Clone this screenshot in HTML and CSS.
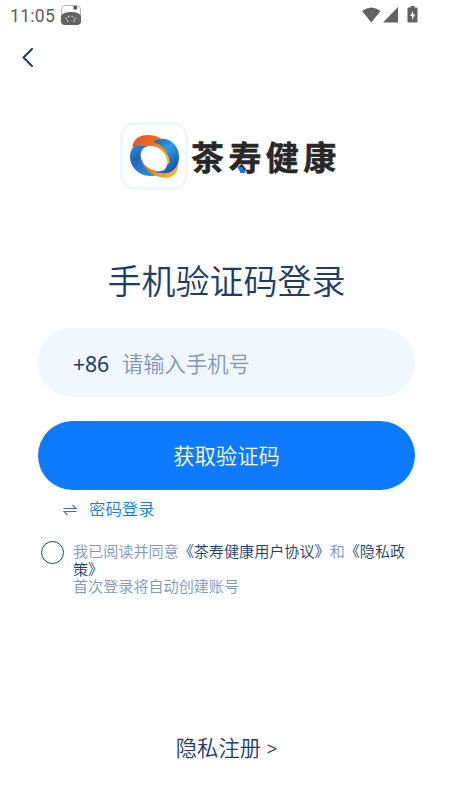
FILE: index.html
```
<!DOCTYPE html>
<html lang="zh-CN">
<head>
<meta charset="utf-8">
<meta name="viewport" content="width=device-width, initial-scale=1">
<title>茶寿健康</title>
<link rel="stylesheet" href="styles.css">
</head>
<body>
<header class="status">
  <span class="time">11:05</span>
  <svg class="app-icon" width="20" height="20" viewBox="0 0 20 20">
    <rect x=".5" y=".5" width="19" height="19" rx="4" fill="#fff" stroke="#b5b5b5"/>
    <path d="M0 11Q2 7 10 7t10 4v5q0 4-4 4H4q-4 0-4-4z" fill="#626262"/>
    <rect x="12.5" y="1" width="3.5" height="3.5" fill="#555"/>
    <path d="M4.500 13.500h1.300M7 11.500h1.300M10.500 11.500h1.300M13.500 13.500h1.300M6 16h1.300M12.500 16h1.300" stroke="#ddd" stroke-width="1.300"/>
  </svg>
  <svg class="signals" width="58" height="20" viewBox="0 0 58 20">
    <path d="M1 6Q10.500-1 19.500 6l-9.200 11.500z" fill="#626262"/>
    <path d="M22 17.500 37 2v15.500z" fill="#626262"/>
    <path d="M47.500 2.500h2V1h4v1.500h2q1 0 1 1v13q0 1-1 1h-8q-1 0-1-1v-13q0-1 1-1z" fill="#626262"/>
    <path d="M52 6 49 11h2v4l3.200-5.500H52z" fill="#fff"/>
  </svg>
</header>
<nav class="nav">
  <svg width="12" height="20" viewBox="0 0 12 20" fill="none" stroke="#1d3c69" stroke-width="2" stroke-linecap="round" stroke-linejoin="round"><path d="M10 1 1.500 9.500l8.500 8.500"/></svg>
</nav>
<main>
  <div class="brand">
    <div class="brand-mark">
      <svg width="54" height="48" viewBox="6 6 162 144">
        <defs>
          <linearGradient id="warm" x1="0" y1="0" x2="1" y2="1"><stop offset="0" stop-color="#e5482a"/><stop offset=".5" stop-color="#f47920"/><stop offset="1" stop-color="#fcc80c"/></linearGradient>
          <linearGradient id="left" x1="0" y1="0" x2=".7" y2="1"><stop offset="0" stop-color="#2f9fe2"/><stop offset=".4" stop-color="#1f66bb"/><stop offset="1" stop-color="#2b94df"/></linearGradient>
          <linearGradient id="right" x1="0" y1="0" x2=".6" y2="1"><stop offset="0" stop-color="#1d5db4"/><stop offset=".45" stop-color="#2b9ce3"/><stop offset="1" stop-color="#1b55ab"/></linearGradient>
        </defs>
        <path fill="url(#left)" d="M15 80C15 55 32 39 58 37L88 40 50 85 105 128C96 135 86 139 74 138C40 136 15 110 15 80z"/>
        <path fill="url(#right)" d="M84 36C91 27 105 24 120 27C145 32 162 53 162 82C162 110 145 130 118 131L98 128 130 90z"/>
        <path fill="url(#warm)" d="M22 52C24 29 42 15 67 15C87 15 101 20 112 29C99 27 89 30 84 37C112 42 132 69 134 97L126 106 70 50C53 46 35 47 22 52z"/>
        <path fill="url(#warm)" d="M46 76L54 72 92 127C103 132 119 132 134 128C148 122 156 112 158 99C163 124 146 143 123 143C82 143 52 119 46 76z"/>
        <path fill="#fff" d="M75 48C101 46 128 70 127 97C127 114 118 124 101 124C72 123 48 101 47 76C47 58 58 49 75 48z"/>
      </svg>
    </div>
    <span class="brand-name">茶<span class="shou">寿<i></i></span>健康</span>
  </div>
  <h1>手机验证码登录</h1>
  <div class="phone"><span class="code">+86</span><span class="hint">请输入手机号</span></div>
  <button class="submit">获取验证码</button>
  <a class="switch">
    <svg width="14" height="12" viewBox="0 0 14 12" fill="none" stroke="#2878d3" stroke-width="1.100"><path d="M.5 4.500h12.500L9.500 1M13.500 7.500H1L4.500 11"/></svg>
    <span>密码登录</span>
  </a>
  <div class="agreement">
    <span class="check"></span>
    <p>我已阅读并同意<b>《茶寿健康用户协议》</b>和<b>《隐私政<br>策》</b><br>首次登录将自动创建账号</p>
  </div>
</main>
<footer>隐私注册 &gt;</footer>
</body>
</html>
```
FILE: styles.css
```
* { box-sizing: border-box; }
body {
  margin: 0;
  height: 805px;
  display: flex;
  flex-direction: column;
  overflow: hidden;
  background: #fff;
  color: #1d3c69;
  font-family: Roboto, "Noto Sans CJK SC", sans-serif;
  font-weight: 350;
}
svg { display: block; flex: none; }
.status {
  height: 32px;
  display: flex;
  align-items: center;
  padding: 0 34px 2px 10px;
}
.time {
  width: 51px;
  padding-top: 2px;
  font: 400 17.5px/20px Roboto, sans-serif;
  letter-spacing: .3px;
  color: #5c5c5c;
}
.signals { margin-left: auto; }
.nav { height: 52px; padding: 16px 22px; }
main { padding: 0 38px; }
.brand { display: flex; align-items: center; margin: 38px 0 0 82px; }
.brand-mark {
  width: 68px;
  height: 68px;
  display: flex;
  align-items: center;
  justify-content: center;
  border: 3px solid #f0f6ff;
  border-radius: 15px;
}
.brand-name {
  margin-left: 3px;
  white-space: nowrap;
  font: 700 33px/46px "Noto Sans CJK SC", sans-serif;
  letter-spacing: 4.4px;
  color: #282828;
  -webkit-text-stroke: .5px #282828;
}
.shou { position: relative; }
.shou i {
  position: absolute;
  left: 11px;
  bottom: 7px;
  width: 5px;
  height: 6px;
  background: #0e7bff;
  transform: skewX(28deg);
}
h1 {
  margin: 67px 0 20px;
  text-align: center;
  font-size: 34px;
  line-height: 51px;
  font-weight: 350;
  white-space: nowrap;
}
.phone {
  height: 69px;
  display: flex;
  align-items: center;
  padding-left: 35px;
  border-radius: 35px;
  background: #f0f7ff;
  font-size: 21.3px;
}
.code { width: 49px; padding-top: 1px; font-family: "Noto Sans", sans-serif; font-weight: 400; letter-spacing: -.2px; }
.hint { color: #7e97b8; }
.submit {
  display: block;
  width: 100%;
  height: 69px;
  margin-top: 24px;
  padding: 0 0 1px;
  border: 0;
  border-radius: 35px;
  background: #0e7bff;
  color: #fff;
  font: 350 21.3px/68px "Noto Sans CJK SC", sans-serif;
}
.switch {
  display: flex;
  align-items: center;
  gap: 12px;
  height: 24px;
  margin: 8px 0 0 25px;
  color: #1b7ae8;
  font-size: 16.4px;
  line-height: 26px;
}
.agreement { display: flex; margin: 19px -10px 0 3px; }
.check {
  flex: none;
  width: 23px;
  height: 23px;
  margin-right: 9px;
  border: 1.5px solid #1d3c69;
  border-radius: 50%;
}
.agreement p {
  margin: 1px 0 0;
  font: 350 15.1px/17.7px "Noto Sans CJK SC", sans-serif;
  color: #7e97b8;
  white-space: nowrap;
}
.agreement b { font-weight: 350; color: #1d3c69; }
footer {
  margin-top: auto;
  height: 72px;
  text-align: center;
  font-size: 21.3px;
  line-height: 32px;
}
```
